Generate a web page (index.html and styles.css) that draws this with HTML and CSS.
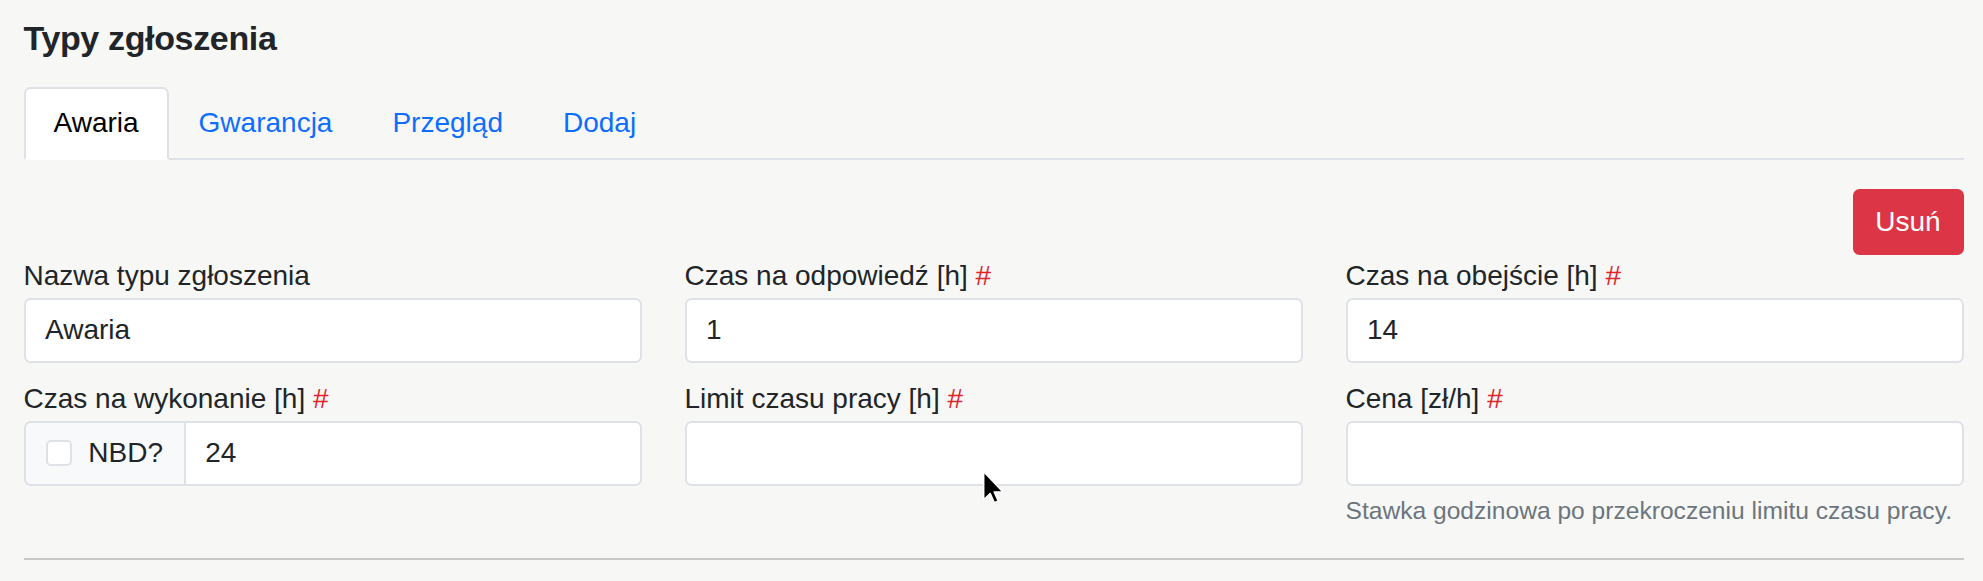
FILE: index.html
```html
<!DOCTYPE html>
<html lang="pl">
<head>
<meta charset="utf-8">
<title>Typy zgłoszenia</title>
<link rel="stylesheet" href="styles.css">
</head>
<body>
<div class="page">
  <h5 class="title">Typy zgłoszenia</h5>
  <ul class="tabs">
    <li><a class="tab active">Awaria</a></li>
    <li><a class="tab">Gwarancja</a></li>
    <li><a class="tab">Przegląd</a></li>
    <li><a class="tab">Dodaj</a></li>
  </ul>
  <div class="pane">
    <div class="actions"><button class="btn-danger" type="button">Usuń</button></div>
    <div class="grid">
      <div class="field">
        <label class="label">Nazwa typu zgłoszenia</label>
        <input class="input" type="text" value="Awaria">
      </div>
      <div class="field">
        <label class="label">Czas na odpowiedź [h] <span class="req">#</span></label>
        <input class="input" type="text" value="1">
      </div>
      <div class="field">
        <label class="label">Czas na obejście [h] <span class="req">#</span></label>
        <input class="input" type="text" value="14">
      </div>
      <div class="field">
        <label class="label">Czas na wykonanie [h] <span class="req">#</span></label>
        <div class="group">
          <span class="addon"><span class="check"></span>NBD?</span>
          <input class="input group-input" type="text" value="24">
        </div>
      </div>
      <div class="field">
        <label class="label">Limit czasu pracy [h] <span class="req">#</span></label>
        <input class="input" type="text" value="">
      </div>
      <div class="field">
        <label class="label">Cena [zł/h] <span class="req">#</span></label>
        <input class="input" type="text" value="">
        <div class="help">Stawka godzinowa po przekroczeniu limitu czasu pracy.</div>
      </div>
    </div>
    <hr class="sep">
  </div>
</div>
<svg class="cursor" width="22" height="34" viewBox="-1 -1 13 20" aria-hidden="true">
  <path d="M0 0 L0 16.5 L3.8 12.8 L6.3 18.3 L8.6 17.3 L6.2 11.9 L11.4 11.9 Z" fill="#000" stroke="#fff" stroke-width="0.9" stroke-linejoin="round"/>
</svg>
</body>
</html>
```
FILE: styles.css
```css
html, body {
  margin: 0;
  background: #f7f8f6;
}
body {
  font-family: "Liberation Sans", Arial, Helvetica, sans-serif;
  font-size: 28px;
  color: #212529;
  position: relative;
}
.page {
  padding: 17px 19.5px 0 23.5px;
}
.title {
  margin: 0 0 28px;
  font-size: 34px;
  font-weight: bold;
  letter-spacing: -0.35px;
  line-height: 42px;
  color: #212529;
}
.tabs {
  display: flex;
  list-style: none;
  margin: 0;
  padding: 0;
  border-bottom: 2px solid #dee2e6;
}
.tab {
  display: block;
  padding: 13px 28px 14px;
  line-height: 41.5px;
  border: 2px solid transparent;
  border-radius: 6.5px 6.5px 0 0;
  margin-bottom: -2px;
  color: #0d6efd;
  cursor: pointer;
}
.tab.active {
  background: #fff;
  color: #000;
  border-color: #dee2e6 #dee2e6 #fff;
}
.pane {
  padding-top: 29px;
}
.actions {
  display: flex;
  justify-content: flex-end;
}
.btn-danger {
  font: inherit;
  line-height: 41.5px;
  padding: 10.4px 20.8px;
  border: 2px solid #dc3545;
  background: #dc3545;
  color: #fff;
  border-radius: 6.5px;
}
.grid {
  display: grid;
  grid-template-columns: repeat(3, 1fr);
  column-gap: 43px;
  align-items: start;
}
.field {
  margin-bottom: 15px;
  min-width: 0;
}
.label {
  display: block;
  line-height: 41.5px;
  margin-bottom: 1.5px;
}
.req {
  color: #e0242b;
}
.input {
  display: block;
  box-sizing: border-box;
  width: 100%;
  height: 65px;
  margin: 0;
  padding: 0 19.5px;
  font: inherit;
  color: #212529;
  background: #fff;
  border: 2px solid #dee2e6;
  border-radius: 6.5px;
  outline: none;
}
.group {
  display: flex;
  height: 65px;
}
.addon {
  display: flex;
  align-items: center;
  box-sizing: border-box;
  padding: 0 20.8px;
  background: #f8f9fa;
  border: 2px solid #dee2e6;
  border-radius: 6.5px 0 0 6.5px;
  white-space: nowrap;
}
.check {
  display: inline-block;
  box-sizing: border-box;
  width: 26px;
  height: 26px;
  margin-right: 16px;
  background: #fff;
  border: 2px solid #dee2e6;
  border-radius: 5px;
}
.group-input {
  flex: 1;
  min-width: 0;
  height: 65px;
  margin-left: -2px;
  border-radius: 0 6.5px 6.5px 0;
}
.help {
  margin-top: 7.5px;
  font-size: 24.6px;
  line-height: 36.3px;
  color: #6c757d;
}
.sep {
  margin: 13.5px 0 0;
  border: 0;
  border-top: 2px solid #c7c9c7;
}
.cursor {
  position: absolute;
  left: 982px;
  top: 470px;
}
```
